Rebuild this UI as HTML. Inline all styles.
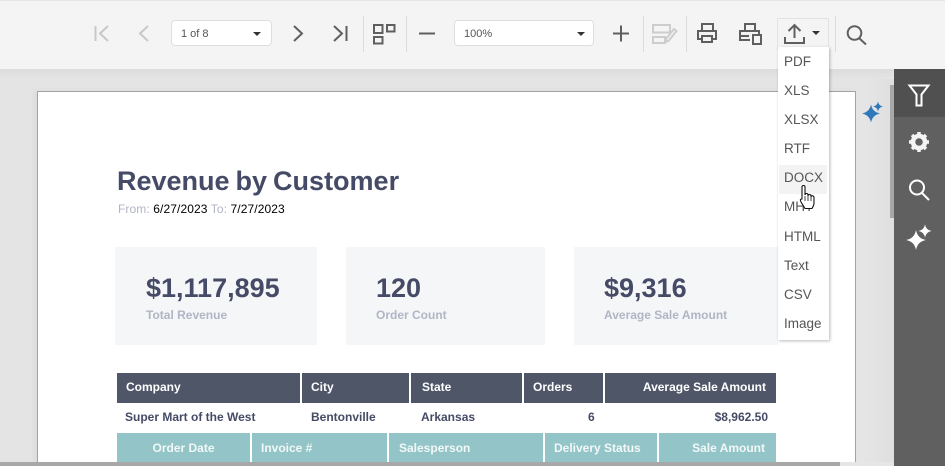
<!DOCTYPE html>
<html><head><meta charset="utf-8">
<style>
html,body{margin:0;padding:0;width:945px;height:466px;overflow:hidden;background:#e4e4e4;font-family:"Liberation Sans",sans-serif}
#w{position:relative;width:945px;height:466px;overflow:hidden}
.a{position:absolute}
.t{position:absolute;white-space:nowrap;line-height:1}
svg{position:absolute;overflow:visible}
.sep{position:absolute;top:16px;width:1px;height:36px;background:#dcdcdc}
.combo{position:absolute;top:20px;height:26px;background:#fff;border:1px solid #dedede;border-radius:4px;box-sizing:border-box}
.combo span{position:absolute;left:9px;top:7px;font-size:11px;line-height:12px;color:#555}
.combo i{position:absolute;top:11px;width:0;height:0;border-left:4px solid transparent;border-right:4px solid transparent;border-top:4px solid #333}
.m{position:absolute;left:784px;font-size:13.5px;line-height:16px;color:#555;white-space:nowrap}
.c{position:absolute;top:247px;height:98px;background:#f5f6f8}
.big{position:absolute;font-size:27px;font-weight:bold;color:#454b66;line-height:30px;top:273px;white-space:nowrap}
.lbl{position:absolute;font-size:12px;font-weight:bold;color:#b1b5c4;line-height:14px;top:308px;white-space:nowrap}
.h{position:absolute;top:373px;height:30px;background:#4e5668;color:#fff;font-size:12px;font-weight:bold;line-height:28px;box-sizing:border-box;white-space:nowrap}
.r{position:absolute;top:410px;font-size:12px;font-weight:bold;color:#454b66;line-height:14px;white-space:nowrap}
.g{position:absolute;top:433px;height:29px;background:#93c5c8;color:#f2f7f7;font-size:12px;font-weight:bold;line-height:30px;box-sizing:border-box;white-space:nowrap}
</style></head><body><div id="w">

<!-- workspace -->
<div class="a" style="left:0;top:69px;width:894px;height:397px;background:linear-gradient(#dcdcdc,#e4e4e4 10px)"></div>
<div class="a" style="left:860px;top:79px;width:34px;height:387px;background:linear-gradient(90deg,#e6e6e6,#dfdfdf)"></div>

<!-- page -->
<div class="a" style="left:37px;top:91px;width:819px;height:375px;background:#fff;border:1px solid #a3a3a3;border-bottom:0;box-sizing:border-box;box-shadow:-3px 0 5px rgba(0,0,0,.04)"></div>

<div class="t" style="left:117px;top:166px;font-size:27px;font-weight:bold;color:#454b66;line-height:30px;word-spacing:-1.5px">Revenue by Customer</div>
<div class="t" style="left:118px;top:202px;font-size:12px;line-height:14px;color:#b1b5c4;letter-spacing:.1px">From: <span style="color:#000">6/27/2023</span> To: <span style="color:#000">7/27/2023</span></div>

<div class="c" style="left:115px;width:202px"></div>
<div class="c" style="left:346px;width:199px"></div>
<div class="c" style="left:574px;width:204px"></div>
<div class="big" style="left:146px">$1,117,895</div>
<div class="lbl" style="left:146px">Total Revenue</div>
<div class="big" style="left:376px">120</div>
<div class="lbl" style="left:376px">Order Count</div>
<div class="big" style="left:604px">$9,316</div>
<div class="lbl" style="left:604px">Average Sale Amount</div>

<div class="h" style="left:117px;width:183px;padding-left:9px">Company</div>
<div class="h" style="left:302px;width:107px;padding-left:9px">City</div>
<div class="h" style="left:411px;width:111px;padding-left:11px">State</div>
<div class="h" style="left:524px;width:79px;padding-left:9px">Orders</div>
<div class="h" style="left:605px;width:171px;padding-right:10px;text-align:right">Average Sale Amount</div>

<div class="r" style="left:125px">Super Mart of the West</div>
<div class="r" style="left:311px">Bentonville</div>
<div class="r" style="left:421px">Arkansas</div>
<div class="r" style="left:588px">6</div>
<div class="r" style="right:177px">$8,962.50</div>

<div class="g" style="left:117px;width:133px;text-align:center">Order Date</div>
<div class="g" style="left:252px;width:135px;padding-left:9px">Invoice #</div>
<div class="g" style="left:389px;width:154px;padding-left:10px">Salesperson</div>
<div class="g" style="left:545px;width:112px;padding-left:9px">Delivery Status</div>
<div class="g" style="left:659px;width:117px;padding-right:11px;text-align:right">Sale Amount</div>

<!-- blue sparkle -->
<svg style="left:0;top:0" width="945" height="130"><path d="M871 104.500Q872.500 112 880 113.500Q872.500 115 871 122.500Q869.500 115 862 113.500Q869.500 112 871 104.500Z M878 101.500Q878.700 105.800 883 106.500Q878.700 107.200 878 111.500Q877.300 107.200 873 106.500Q877.300 105.800 878 101.500Z" fill="#2f78b9"/></svg>

<!-- scrollbars -->
<div class="a" style="left:890px;top:85px;width:4px;height:133px;background:#a8a8a8"></div>
<div class="a" style="left:0;top:462px;width:894px;height:4px;background:#e6e6e6"></div>
<div class="a" style="left:0;top:462px;width:840px;height:4px;background:#a8a8a8"></div>

<!-- toolbar -->
<div class="a" style="left:0;top:0;width:945px;height:69px;background:#f4f4f4;border-top:1px solid #e4e4e4;box-sizing:border-box"></div>

<svg style="left:0;top:0" width="945" height="69" fill="none" stroke-width="2">
<g stroke="#c8c8c8">
<path d="M95.500 26V41M108 26L100 33.500L108 41"/>
<path d="M148 26L140 33.500L148 41"/>
</g>
<g stroke="#5f5f5f">
<path d="M294 26L302 33.500L294 41"/>
<path d="M334 26L342 33.500L334 41M346.500 26V41"/>
<path d="M374 25h8.500v8h-8.500zM387 25h7.500v6.500h-7.500zM374 37h8.500v6.500h-8.500z"/>
<path d="M419 33.500H435"/>
<path d="M613 33.500H629M621 25.500V41.500"/>
<path d="M702 30V24h11v6M702 39h-4V31h18v8h-4M702 36h10v6h-10z"/>
<path d="M745 30V24h10v6M750 40h-10V31h19v3M740 36h9M753 35h8v9h-8z"/>
<path d="M785 37v6h19v-6M794.500 38V25M788.500 31l6-6 6 6"/>
<circle cx="854.500" cy="33" r="6.800"/><path d="M859.500 38.500l6.500 6"/>
</g>
<g stroke="#cdcdcd">
<path d="M653 25h17v7.500h-17zM653 37h12v6h-12z"/>
<path d="M666 39l8-10 2.500 2-8 10-3.500 1z" fill="#f4f4f4"/>
</g>
</svg>
<div class="sep" style="left:363px"></div>
<div class="sep" style="left:406px"></div>
<div class="sep" style="left:643px"></div>
<div class="sep" style="left:686px"></div>
<div class="sep" style="left:835px"></div>

<div class="combo" style="left:171px;width:101px"><span>1 of 8</span><i style="left:81px"></i></div>
<div class="combo" style="left:454px;width:140px"><span>100%</span><i style="left:122px"></i></div>

<!-- export button -->
<div class="a" style="left:777px;top:18px;width:52px;height:32px;border:1px solid #e2e2e2;border-bottom:0;box-sizing:border-box"></div>
<div class="a" style="left:812px;top:31px;width:0;height:0;border-left:4px solid transparent;border-right:4px solid transparent;border-top:4px solid #333"></div>

<!-- menu -->
<div class="a" style="left:778px;top:47px;width:51px;height:293px;background:#fff;box-shadow:1px 1px 3px rgba(0,0,0,.28)"></div>
<div class="a" style="left:779px;top:165px;width:48px;height:29px;background:#f3f3f3"></div>
<div class="m" style="top:54px">PDF</div>
<div class="m" style="top:83px">XLS</div>
<div class="m" style="top:112px">XLSX</div>
<div class="m" style="top:141px">RTF</div>
<div class="m" style="top:170px">DOCX</div>
<div class="m" style="top:199px">MHT</div>
<div class="m" style="top:229px">HTML</div>
<div class="m" style="top:258px">Text</div>
<div class="m" style="top:287px">CSV</div>
<div class="m" style="top:316px">Image</div>

<!-- cursor -->
<svg style="left:798px;top:184px" width="20" height="28" viewBox="0 0 20 28"><path d="M4 3c0-2 3-2 3 0v8c0-2 3-2 3 0v1c0-2 3-2 3 0v1c0-2 3-1.500 3 .5v6c0 2-1 3-2 5H7L3 18c-1-2-1-3 1-3z" fill="#fff" stroke="#111" stroke-width="1.100"/><path d="M7 12v5M10 12v5M13 13v4" stroke="#111" stroke-width=".8"/></svg>

<!-- sidebar -->
<div class="a" style="left:894px;top:69px;width:51px;height:397px;background:#606060"></div>
<div class="a" style="left:894px;top:69px;width:51px;height:48px;background:#505050"></div>
<svg style="left:894px;top:69px" width="51" height="190" viewBox="0 0 51 190">
<path d="M15.500 16.500h19l-7 9v11h-5v-11z" fill="none" stroke="#fff" stroke-width="2"/>
<g transform="translate(25 73)" fill="none" stroke="#f4f4f4">
<circle r="6" stroke-width="4.500"/>
<path d="M0-10V-7M0 7V10M-10 0H-7M7 0H10M-7-7L-5-5M5 5L7 7M7-7L5-5M-5 5L-7 7" stroke-width="3.500"/>
</g>
<circle cx="23" cy="118.500" r="7" fill="none" stroke="#fff" stroke-width="2"/>
<path d="M28 124l7 7" stroke="#fff" stroke-width="2"/>
<path d="M22 161Q23.500 169.500 32 171Q23.500 172.500 22 181Q20.500 172.500 12 171Q20.500 169.500 22 161Z M31 155.500Q32 161 37.500 162Q32 163 31 168.500Q30 163 24.500 162Q30 161 31 155.500Z" fill="#fff"/>
</svg>
</div></body></html>
